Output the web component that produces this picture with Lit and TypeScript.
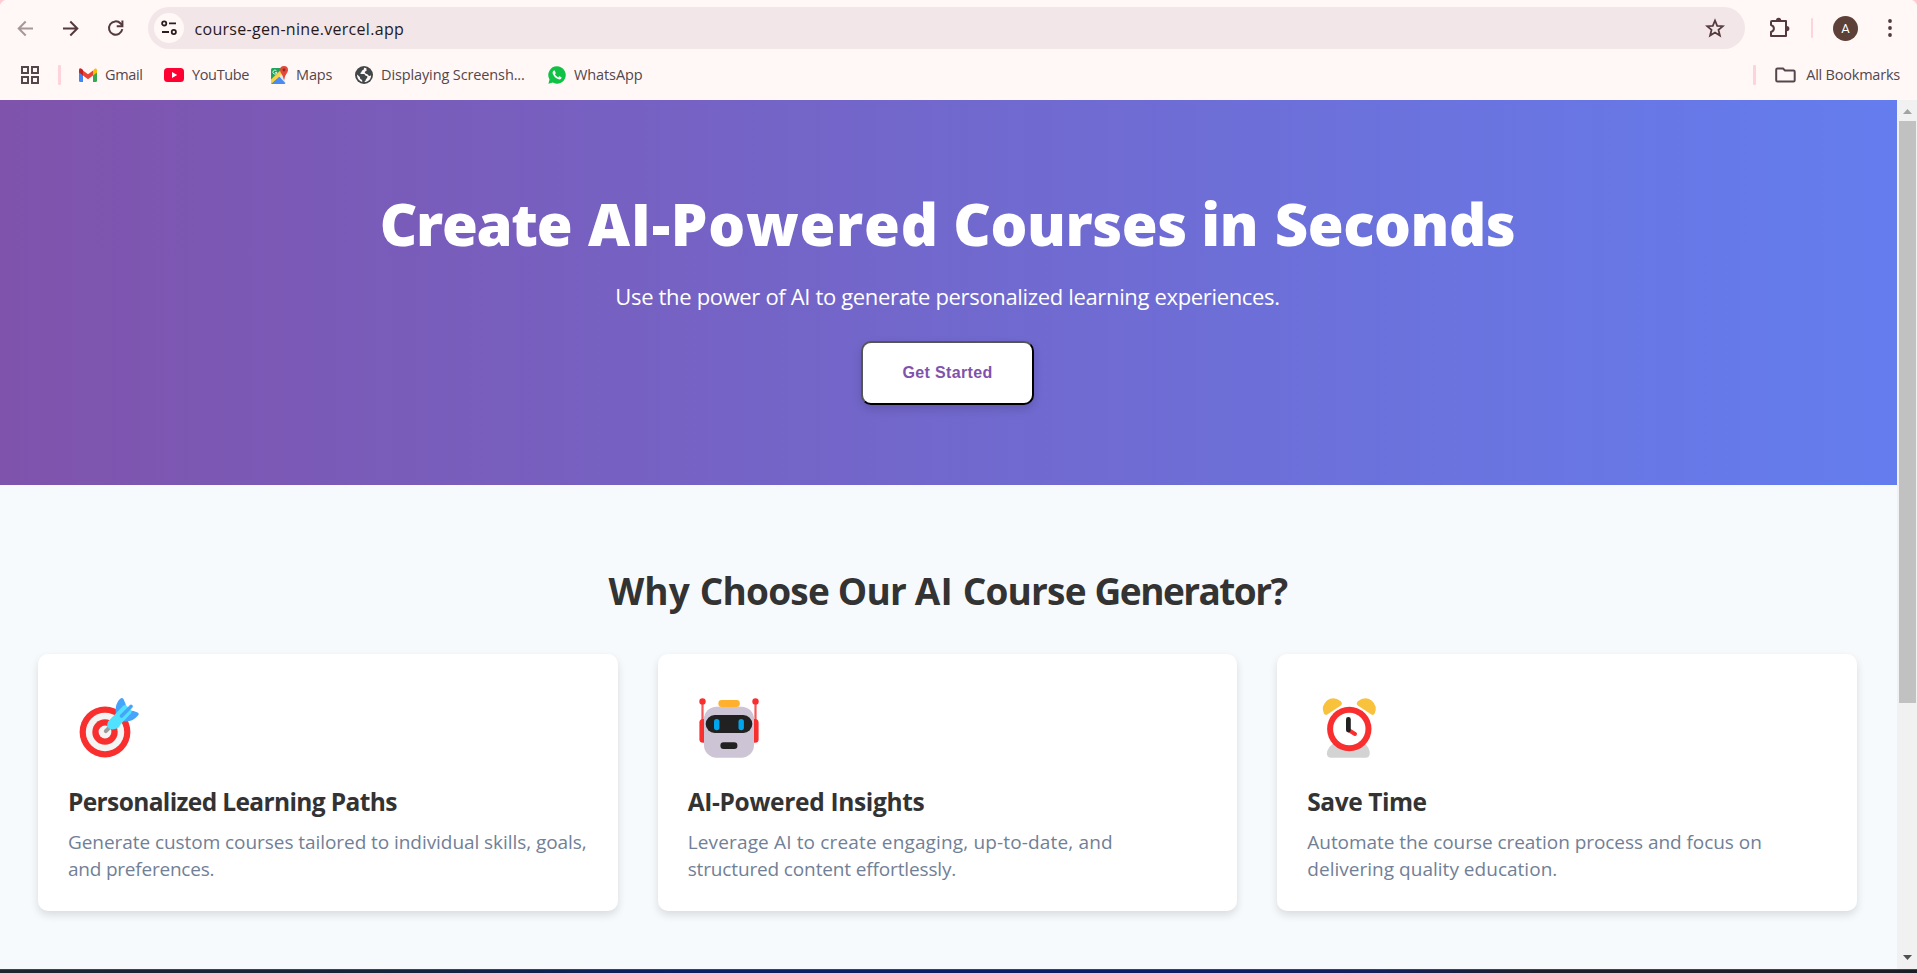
import { LitElement, html, css, TemplateResult } from "lit";
import { customElement } from "lit/decorators.js";

type Line = { text: string; spacing: number };
type Feature = { icon: TemplateResult; title: Line; lines: Line[] };
type Bookmark = { icon: TemplateResult; label: string; cls: string };

const targetIcon = html`<svg class="emoji" viewBox="0 0 60 60" width="60" height="60">
  <circle cx="26" cy="34" r="25.4" fill="#f92f2f" /><circle cx="26" cy="34" r="19.2" fill="#f4f4f4" />
  <circle cx="26" cy="34" r="12.7" fill="#f92f2f" /><circle cx="26" cy="34" r="6.4" fill="#f4f4f4" />
  <path d="M26.8 33.2l4-4" stroke="#9b9b9b" stroke-width="4" stroke-linecap="round" />
  <path d="M38 19C35.200 12 37 4.500 41.200 .8Q43.200-.8 44.600 1.200Q47.200 5.500 47.400 11.500zM41.500 22.500Q52 26 59 17.600Q60.600 15.400 58.600 14.400Q54 12.200 48.500 12.600z" fill="#46a4fb" />
  <path d="M29.300 23.200L44.200 7.700Q46.500 6.400 47.800 8L52.200 12.300Q53.400 13.600 52 15.200L41.500 26.500Q39.300 31.400 33.500 31.400Q28.300 31.200 28.200 27.300Q28.200 25 29.300 23.200z" fill="#50e2ff" />
  <path d="M52 8.500L42.500 18" stroke="#46a4fb" stroke-width="3.600" stroke-linecap="round" />
</svg>`;

const robotIcon = html`<svg class="emoji" viewBox="0 0 60 60" width="60" height="60">
  <path d="M3.500 4v24M56.500 4v24" stroke="#f3585b" stroke-width="2.200" />
  <circle cx="3.500" cy="3.400" r="3.200" fill="#f92f2f" /><circle cx="56.500" cy="3.400" r="3.200" fill="#f92f2f" />
  <rect x=".4" y="21" width="8" height="23.800" rx="3.600" fill="#f92f2f" /><rect x="51.600" y="21" width="8" height="23.800" rx="3.600" fill="#f92f2f" />
  <rect x="5" y="8.700" width="50" height="51" rx="12.500" fill="#cdc4d6" />
  <rect x="19.400" y="2" width="21.400" height="6.900" rx="3.200" fill="#ffb02e" />
  <rect x="6.700" y="17" width="46.600" height="18" rx="9" fill="#212121" />
  <rect x="15" y="21" width="5.400" height="11.200" rx="2.700" fill="#00a6ed" /><rect x="39.500" y="21" width="5.400" height="11.200" rx="2.700" fill="#00a6ed" />
  <rect x="21.400" y="44.300" width="17" height="6.700" rx="3.200" fill="#212121" />
</svg>`;

const clockIcon = html`<svg class="emoji clock" viewBox="0 0 60 60" width="60" height="60">
  <path d="M12 45H42Q48 50 47.700 55.500Q47.400 59.800 43.500 59.800H9.300Q5 59.800 4.900 55.500Q5 50 12 45z" fill="#d3d3d3" />
  <path d="M5.300 16.600L18.800 7.400Q21 5.500 18.800 3.200Q11.500-2.500 5 2.600Q-1.300 8.200 1.900 15.600Q3.200 17.800 5.300 16.600z" fill="#f9c23c" />
  <path transform="matrix(-1 0 0 1 54.600 0)" d="M5.300 16.600L18.800 7.400Q21 5.500 18.800 3.200Q11.500-2.500 5 2.600Q-1.300 8.200 1.900 15.600Q3.200 17.800 5.300 16.600z" fill="#f9c23c" />
  <circle cx="27.300" cy="31" r="22.200" fill="#f92f2f" /><circle cx="27.300" cy="31" r="16.200" fill="#fff" />
  <path d="M27.300 32.500L33 36" stroke="#f92f2f" stroke-width="4" stroke-linecap="round" />
  <path d="M26.400 21.500V32" stroke="#212121" stroke-width="4.800" stroke-linecap="round" />
</svg>`;

const features: Feature[] = [
  {
    icon: targetIcon,
    title: { text: "Personalized Learning Paths", spacing: -0.63 },
    lines: [
      { text: "Generate custom courses tailored to individual skills, goals,", spacing: -0.06 },
      { text: "and preferences.", spacing: -0.22 },
    ],
  },
  {
    icon: robotIcon,
    title: { text: "AI-Powered Insights", spacing: -0.33 },
    lines: [
      { text: "Leverage AI to create engaging, up-to-date, and", spacing: 0.15 },
      { text: "structured content effortlessly.", spacing: -0.141 },
    ],
  },
  {
    icon: clockIcon,
    title: { text: "Save Time", spacing: -0.45 },
    lines: [
      { text: "Automate the course creation process and focus on", spacing: -0.048 },
      { text: "delivering quality education.", spacing: 0.02 },
    ],
  },
];

const bookmarks: Bookmark[] = [
  {
    cls: "gmail",
    label: "Gmail",
    icon: html`<svg width="18" height="14" viewBox="0 0 18 14">
      <path d="M0 3h4v11H1.300Q0 14 0 12.700z" fill="#4285f4" /><path d="M14 3h4v9.700Q18 14 16.700 14H14z" fill="#34a853" />
      <path d="M14 2.500L16 .6Q18 0 18 2.200V4.500L14 7.500z" fill="#fbbc04" />
      <path d="M4 2.400L9 6.200 14 2.400V7.500L9 11.300 4 7.500z" fill="#ea4335" />
      <path d="M0 4.500V2.200Q0-.8 2.600.8L4 2v5.500z" fill="#c5221f" />
    </svg>`,
  },
  {
    cls: "youtube",
    label: "YouTube",
    icon: html`<svg width="20" height="14" viewBox="0 0 20 14"><rect width="20" height="14" rx="3.500" fill="#ff0033" /><path d="M8 4l5.200 3L8 10z" fill="#fff" /></svg>`,
  },
  {
    cls: "maps",
    label: "Maps",
    icon: html`<svg width="18" height="19" viewBox="0 0 18 19">
      <path d="M2.500 2H12L15 9v7.500Q15 18 13.500 18h-11Q1 18 1 16.500v-13Q1 2 2.500 2z" fill="#1fa55b" />
      <path d="M1.600 17.600L9 10.300 15.500 17Q14.900 18 13.500 18h-11Q1.900 18 1.600 17.600z" fill="#4a8af4" />
      <path d="M1 13.500L11.300 3.500 14 6.500 1.600 17.600Q1 17.200 1 16z" fill="#fbd04b" />
      <path d="M9 10.300L12 7.500 15 10.500V16.500L15.200 17z" fill="#e4e6e6" />
      <path d="M6.500 4.900A2 2 0 1 0 6.900 6.500H5.200" fill="none" stroke="#d9f0e2" stroke-width="1" />
      <path d="M14 0a4 4 0 0 1 4 4c0 3-3 4.500-3.700 9.500h-.6C13 8.500 10 7 10 4a4 4 0 0 1 4-4z" fill="#e2483b" /><circle cx="14" cy="4" r="1.400" fill="#8c2a22" />
    </svg>`,
  },
  {
    cls: "globe",
    label: "Displaying Screensh...",
    icon: html`<svg width="18" height="18" viewBox="0 0 18 18"><circle cx="9" cy="9" r="9" fill="#42474a" />
      <path d="M8.800 1.900C9.500 3.200 8.300 3.800 7.400 4.300 6.500 4.800 6.900 6 6 6.600 5.400 7 5 7.800 6 8.100H8.800C9.900 8.100 10.200 9 10.400 9.700 11.500 9.700 12.500 9.800 12.400 11 12.300 12.400 11 12.500 10.800 13.500 10.600 14.800 10 15.600 9 16.100 13.500 16.200 16.200 12.800 16.100 9 15.500 10 14.300 10.200 13.500 9.500 12.800 8.900 12.700 8 11.700 7.900 10.800 7.700 9.600 7 9.800 5.900 10 5 11.300 5.200 11.600 4.400 11.700 3.700 11.200 3.200 11.600 2.400 10.700 2 9.700 1.800 8.800 1.900zM2 8.500C1.900 12 4 15 7.200 15.900 7.400 14.600 7 13.800 6.200 13.500 5.200 13.100 5 12.500 5 11.600 5 10.800 3.700 10.400 3.200 9.600z" fill="#fff8f7" /></svg>`,
  },
  {
    cls: "whatsapp",
    label: "WhatsApp",
    icon: html`<svg width="18" height="18" viewBox="0 0 18 18"><path d="M9 .3a8.700 8.700 0 1 1-4.200 16.300L.4 17.700l1.100-4.300A8.700 8.700 0 0 1 9 .3z" fill="#10c244" />
      <path d="M5.900 4.500C4.500 5.300 4.300 6.800 5 8.300c1.100 2.400 3.200 4.300 5.600 5 1.600.4 2.800-.4 3-1.900L11.400 10.100 10.200 11.400C8.700 10.700 7.600 9.700 6.900 8.300L7.800 7.200 6.800 4.600z" fill="#fff" /></svg>`,
  },
];

@customElement("browser-bar")
class BrowserBar extends LitElement {
  static styles = css`
    :host { display: flex; flex-direction: column; height: 100px; box-sizing: border-box; color: #54393d;
      font-family: "Open Sans", "Noto Sans", sans-serif; background:
      radial-gradient(circle at 8px 8px, #fff8f7 8px, #ffcbd3 9px) 0 0 / 8px 8px no-repeat,
      radial-gradient(circle at 0 8px, #fff8f7 8px, #ffcbd3 9px) 100% 0 / 8px 8px no-repeat, #fff8f7; }
    svg { display: block; flex: none; }
    .row { display: flex; align-items: center; box-sizing: border-box; }
    .nav { height: 56px; padding: 0 25px 0 17px; }
    .back { opacity: .5; }
    .forward { margin-left: 28px; }
    .reload { margin-left: 26px; }
    .address { display: flex; align-items: center; flex: 1; height: 42px; margin-left: 21px; margin-right: 24px;
      box-sizing: border-box; padding: 0 20px 0 6px; border-radius: 21px; background: #f2e6e9; }
    .site { display: grid; place-items: center; width: 30px; height: 30px; border-radius: 50%; background: #fff8f7; }
    .url { flex: 1; margin-left: 10.5px; padding-top: 1px; font-size: 16px; letter-spacing: .3px; color: #26191b; }
    .sep { width: 2px; height: 20px; border-radius: 1px; background: #ffd3da; }
    .sep.thick { width: 3px; }
    .tools { margin-left: 21px; }
    .avatar { display: grid; place-items: center; width: 25px; height: 25px; margin: 0 30px 0 20px; border-radius: 50%;
      background: #5d4037; color: #fff; font: 13px Roboto, sans-serif; }
    .marks { height: 38px; padding: 0 17px 0 21px; font-size: 14.5px; color: #54464a; }
    .first { margin: 0 18px 0 19px; }
    .mark { display: flex; align-items: center; gap: 8px; white-space: nowrap; }
    .label { padding-bottom: 2px; }
    .gmail { width: 85px; letter-spacing: -.34px; }
    .youtube { width: 106px; letter-spacing: -.36px; }
    .maps { width: 85px; letter-spacing: -.16px; }
    .globe { width: 193px; letter-spacing: -.12px; }
    .whatsapp { flex: 1; letter-spacing: -.1px; }
    .folder { margin: 0 10px 0 19px; }
    .all { letter-spacing: -.22px; }
  `;
  render() {
    return html`
      <div class="row nav">
        <svg class="back" width="17" height="17" viewBox="0 0 17 17" fill="none" stroke="currentColor" stroke-width="2"><path d="M16 8.500H2.500M8.700 1.500l-7 7 7 7" /></svg>
        <svg class="forward" width="17" height="17" viewBox="0 0 17 17" fill="none" stroke="currentColor" stroke-width="2"><path d="M1 8.500H14.500M8.300 1.500l7 7-7 7" /></svg>
        <svg class="reload" width="22" height="22" viewBox="0 0 22 22" fill="none" stroke="currentColor" stroke-width="2"><path d="M17.300 12.200A6.700 6.700 0 1 1 15.600 6.500L17.600 8.500" /><path d="M17.400 3.500V9.200H11.700" /></svg>
        <div class="address">
          <span class="site"><svg width="16" height="16" viewBox="0 0 16 16" fill="none" stroke="#2b1d20" stroke-width="1.800"><circle cx="3.200" cy="3.400" r="2.100" /><path d="M8 3.400h7M1 12h7" /><circle cx="12.800" cy="12" r="2.100" /></svg></span>
          <span class="url">course-gen-nine.vercel.app</span>
          <svg width="20" height="20" viewBox="0 0 20 20" fill="none" stroke="currentColor" stroke-width="1.800"><path d="M10 2.500l2.200 5.300 5.700.4-4.400 3.700 1.400 5.600-4.900-3-4.900 3 1.400-5.600L2.100 8.200l5.700-.4z" /></svg>
        </div>
        <svg width="21" height="22" viewBox="0 0 21 22"><path d="M3 4H17V19H2V15Q4.900 14 4.900 11.500T2 8V5Q2 4 3 4z" fill="none" stroke="currentColor" stroke-width="2" stroke-linejoin="round" /><path d="M7 3.400a2.600 2.600 0 0 1 5.200 0zM17.800 9a2.600 2.600 0 0 1 0 5.200z" fill="currentColor" /></svg>
        <span class="sep tools"></span>
        <span class="avatar">A</span>
        <svg width="4" height="20" viewBox="0 0 4 20" fill="currentColor"><circle cx="2" cy="3" r="1.900" /><circle cx="2" cy="10" r="1.900" /><circle cx="2" cy="17" r="1.900" /></svg>
      </div>
      <div class="row marks">
        <svg width="18" height="18" viewBox="0 0 18 18" fill="none" stroke="currentColor" stroke-width="2"><path d="M1 1h6v6H1zM11 1h6v6h-6zM1 11h6v6H1zM11 11h6v6h-6z" /></svg>
        <span class="sep thick first"></span>
        ${bookmarks.map((b) => html`<span class="mark ${b.cls}">${b.icon}<span class="label">${b.label}</span></span>`)}
        <span class="sep thick"></span>
        <svg class="folder" width="21" height="16" viewBox="0 0 21 16" fill="none" stroke="currentColor" stroke-width="2"><path d="M2.500 1.500H8L10 3.500H18.500Q19.700 3.500 19.700 4.700V13.200Q19.700 14.500 18.500 14.500H2.500Q1.200 14.500 1.200 13.200V2.700Q1.200 1.500 2.500 1.500z" /></svg>
        <span class="label all">All Bookmarks</span>
      </div>
    `;
  }
}

@customElement("feature-card")
class FeatureCard extends LitElement {
  static properties = { feature: { attribute: false } };
  declare feature: Feature;
  static styles = css`
    :host { display: block; box-sizing: border-box; height: 257px; padding: 44px 30px 0; border-radius: 10px;
      background: #fff; box-shadow: 0 4px 8px rgba(0, 0, 0, .12); }
    .emoji { display: block; margin-left: 11px; overflow: visible; }
    .emoji.clock { margin-left: 15px; }
    .title { margin: 27px 0 0; font-size: 24.5px; line-height: 34px; font-weight: 700; color: #333; }
    .text { margin: 10px 0 0; font-size: 19px; line-height: 27px; color: #718096; }
    .line { display: block; white-space: nowrap; }
  `;
  render() {
    const f = this.feature;
    return html`
      ${f.icon}
      <h3 class="title" style="letter-spacing:${f.title.spacing}px">${f.title.text}</h3>
      <p class="text">${f.lines.map((l) => html`<span class="line" style="letter-spacing:${l.spacing}px">${l.text}</span>`)}</p>
    `;
  }
}

@customElement("app-root")
class AppRoot extends LitElement {
  static styles = css`
    :host { display: flex; flex-direction: column; width: 100%; height: 973px; overflow: hidden;
      font-family: "Open Sans", "Noto Sans", sans-serif; }
    .view { display: flex; flex: 1; min-height: 0; }
    .page { flex: 1; background: #f7fafc; }
    .hero { display: flex; flex-direction: column; align-items: center; box-sizing: border-box; height: 385px;
      padding: 94px 2px 0 0; color: #fff; background: linear-gradient(90deg, #7f53ac, #647dee); }
    .hero h1 { margin: 0; font-size: 58px; line-height: 60px; font-weight: 800; letter-spacing: -.45px; white-space: nowrap; }
    .tight { margin-right: 2px; letter-spacing: -1.3px; }
    .wide { letter-spacing: .75px; }
    .last { margin-left: 2px; }
    .hero p { margin: 27px 0 30px; font-size: 22px; line-height: 30px; letter-spacing: -.34px; white-space: nowrap; }
    .cta { width: 173px; height: 64px; box-sizing: border-box; padding: 0; border: 2px solid; border-color: #555 #000 #000 #555;
      border-radius: 10px; background: #fff; color: #7f53ac; font: 700 16px "Liberation Sans", sans-serif; letter-spacing: .35px;
      box-shadow: 0 4px 10px rgba(0, 0, 0, .15); }
    .features { padding: 81px 40px 0 38px; }
    .features h2 { margin: 0 0 38px; font-size: 37px; line-height: 50px; font-weight: 700; letter-spacing: -.79px; text-align: center; color: #333; }
    .features .loose { letter-spacing: .15px; }
    .features .close { letter-spacing: -1.54px; }
    .cards { display: grid; grid-template-columns: repeat(3, 1fr); gap: 40px; }
    .scroll { display: flex; flex-direction: column; align-items: center; width: 20px; background: #f1f1f1; }
    .scroll svg { display: block; }
    .thumb { width: 17px; height: 582px; background: #c1c1c1; }
    .space { flex: 1; }
    .edge { height: 4px; box-sizing: border-box; border-top: 1px solid #3d4649;
      background: linear-gradient(90deg, #1b2530, #14243a 20%, #0a2060 35%, #0a1f66 60%, #12205a 72%, #1c1f2b 80%, #1b1d26); }
  `;
  render() {
    return html`
      <browser-bar></browser-bar>
      <div class="view">
        <main class="page">
          <section class="hero">
            <h1><span class="tight">Create</span> <span class="wide">AI-Powered</span> Courses in <span class="last">Seconds</span></h1>
            <p>Use the power of AI to generate personalized learning experiences.</p>
            <button class="cta">Get Started</button>
          </section>
          <section class="features">
            <h2><span class="loose">Why </span>Choose Our <span class="loose">AI </span>Course <span class="close">Generator?</span></h2>
            <div class="cards">${features.map((f) => html`<feature-card .feature=${f}></feature-card>`)}</div>
          </section>
        </main>
        <div class="scroll">
          <svg width="20" height="21" viewBox="0 0 20 21"><path d="M6 14l4.500-5 4.500 5z" fill="#a3a3a3" /></svg>
          <div class="thumb"></div>
          <div class="space"></div>
          <svg width="20" height="21" viewBox="0 0 20 21"><path d="M6 7l4.500 5 4.500-5z" fill="#505050" /></svg>
        </div>
      </div>
      <div class="edge"></div>
    `;
  }
}
